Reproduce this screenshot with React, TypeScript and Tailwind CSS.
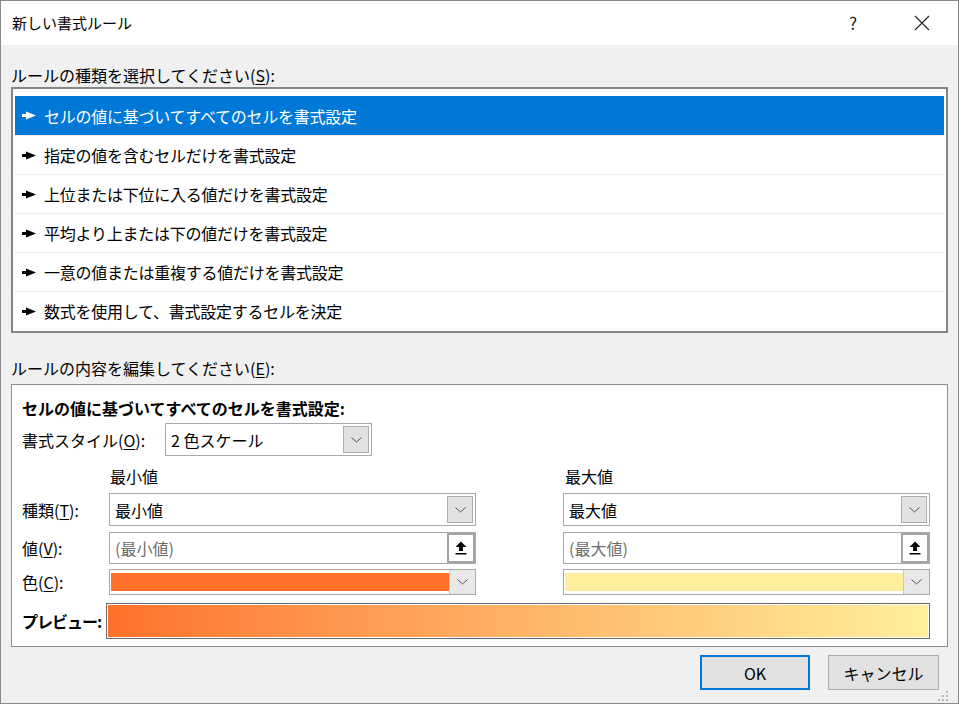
import React from 'react';

const ruleTypes = [
  'セルの値に基づいてすべてのセルを書式設定',
  '指定の値を含むセルだけを書式設定',
  '上位または下位に入る値だけを書式設定',
  '平均より上または下の値だけを書式設定',
  '一意の値または重複する値だけを書式設定',
  '数式を使用して、書式設定するセルを決定',
];

const Pointer: React.FC<{ light?: boolean }> = ({ light }) => (
  <svg width="14" height="9" viewBox="0 0 14 9" className="shrink-0">
    <polygon points="0,3 4,3 4,0.5 14,4.5 4,8.5 4,6 0,6" fill={light ? '#ffffff' : '#000000'} />
  </svg>
);

const Chevron = () => (
  <svg width="11" height="6" viewBox="0 0 11 6">
    <polyline points="0.5,0.5 5.5,5 10.5,0.5" fill="none" stroke="#505050" strokeWidth="1" />
  </svg>
);

const DropButton = () => (
  <div className="m-[2px] flex w-[26px] shrink-0 items-center justify-center self-stretch border border-[#acacac] bg-[#e1e1e1]">
    <Chevron />
  </div>
);

const Key: React.FC<{ text: string; k: string }> = ({ text, k }) => (
  <span className="whitespace-nowrap">
    {text}(<span className="underline underline-offset-2">{k}</span>):
  </span>
);

const Select: React.FC<{ value: string; className?: string }> = ({ value, className = '' }) => (
  <div className={`flex h-[33px] items-stretch border border-[#a9a9a9] bg-white ${className}`}>
    <div className="flex flex-1 items-center pl-[5px]">{value}</div>
    <DropButton />
  </div>
);

const RefInput: React.FC<{ placeholder: string }> = ({ placeholder }) => (
  <div className="flex h-[32px] items-stretch border border-[#a9a9a9] bg-white">
    <div className="flex flex-1 items-center pl-[5px] text-[#6d6d6d]">{placeholder}</div>
    <div className="flex w-[28px] shrink-0 items-center justify-center border-2 border-[#a3a3a3] bg-white">
      <svg width="12" height="14" viewBox="0 0 12 14">
        <polygon points="6,0.5 11.5,6 8,6 8,10 4,10 4,6 0.5,6" fill="#000" />
        <rect x="0.5" y="12" width="11" height="1.5" fill="#000" />
      </svg>
    </div>
  </div>
);

const ColorPick: React.FC<{ color: string }> = ({ color }) => (
  <div className="flex h-[26px] items-stretch border border-[#a9a9a9] bg-white">
    <div className="flex flex-1 py-[3px] pl-[1px]">
      <div className="flex-1" style={{ background: color }} />
    </div>
    <div className="flex w-[26px] shrink-0 items-center justify-center border-l border-[#c8c8c8] bg-[#e8e8e8]">
      <Chevron />
    </div>
  </div>
);

// label column + min column + max column
const Row: React.FC<{ label?: React.ReactNode; min: React.ReactNode; max: React.ReactNode; className?: string }> = ({
  label,
  min,
  max,
  className = '',
}) => (
  <div className={`flex items-center ${className}`}>
    <div className="w-[87px] shrink-0">{label}</div>
    <div className="w-[367px] shrink-0">{min}</div>
    <div className="ml-[87px] w-[367px] shrink-0">{max}</div>
  </div>
);

export default function App() {
  return (
    <div className="flex h-[704px] w-[959px] flex-col border border-[#8a8a8a] bg-[#f0f0f0] text-[16px] leading-[20px] text-black font-['Noto_Sans_CJK_JP',sans-serif]">
      {/* title bar */}
      <div className="flex h-[44px] shrink-0 items-center bg-white pl-[11px]">
        <span className="text-[15px]">新しい書式ルール</span>
        <div className="ml-auto flex items-center">
          <div className="flex w-[46px] justify-center text-[17px] text-[#222]">?</div>
          <div className="ml-[23px] mr-[13px] flex w-[46px] justify-center">
            <svg width="16" height="16" viewBox="0 0 16 16">
              <path d="M1 1 L15 15 M15 1 L1 15" stroke="#222" strokeWidth="1.1" />
            </svg>
          </div>
        </div>
      </div>

      <div className="flex flex-1 flex-col px-[10px]">
        <div className="pt-[20px]">
          <Key text="ルールの種類を選択してください" k="S" />
        </div>

        {/* rule type list */}
        <div className="mt-[2px] border-2 border-[#858585] bg-white px-[2px] pt-[7px] pb-[1px]">
          {ruleTypes.map((t, i) => (
            <div
              key={t}
              className={`flex h-[39px] items-center gap-[8px] pl-[7px] ${
                i === 0 ? 'bg-[#0078d7] text-white' : 'border-t border-[#ececec]'
              }`}
            >
              <Pointer light={i === 0} />
              <span className="tracking-[-0.25px]">{t}</span>
            </div>
          ))}
        </div>

        <div className="mt-[25px]">
          <Key text="ルールの内容を編集してください" k="E" />
        </div>

        {/* rule description panel */}
        <div className="mt-[6px] border border-[#8c8c8c] bg-white pt-[13px] pr-[17px] pb-[7px] pl-[10px]">
          <div className="font-bold">セルの値に基づいてすべてのセルを書式設定:</div>

          <div className="mt-[5px] flex items-center">
            <div className="w-[143px]">
              <Key text="書式スタイル" k="O" />
            </div>
            <Select value="2 色スケール" className="w-[207px]" />
          </div>

          <Row className="mt-[10px]" min={<div className="pl-[1px]">最小値</div>} max={<div className="pl-[2px]">最大値</div>} />
          <Row className="mt-[7px]" label={<Key text="種類" k="T" />} min={<Select value="最小値" />} max={<Select value="最大値" />} />
          <Row
            className="mt-[6px]"
            label={<Key text="値" k="V" />}
            min={<RefInput placeholder="(最小値)" />}
            max={<RefInput placeholder="(最大値)" />}
          />
          <Row
            className="mt-[5px]"
            label={<Key text="色" k="C" />}
            min={<ColorPick color="#ff7128" />}
            max={<ColorPick color="#ffef9c" />}
          />

          <div className="mt-[8px] flex items-center">
            <div className="w-[84px] shrink-0 whitespace-nowrap font-bold tracking-[-1px]">プレビュー:</div>
            <div className="h-[36px] flex-1 border border-[#6a6a6a] p-[1px]">
              <div className="h-full w-full bg-gradient-to-r from-[#ff7128] to-[#ffef9c]" />
            </div>
          </div>
        </div>

        {/* dialog buttons */}
        <div className="mt-[8px] flex justify-end gap-[18px] pr-[9px]">
          <button className="flex h-[35px] w-[110px] items-center justify-center border-2 border-[#0078d7] bg-[#e1e1e1]">
            OK
          </button>
          <button className="flex h-[35px] w-[111px] items-center justify-center border border-[#adadad] bg-[#e1e1e1]">
            キャンセル
          </button>
        </div>

        <div className="mt-auto flex justify-end pb-[2px]">
          <svg width="10" height="10" viewBox="0 0 10 10">
            {[
              [8, 0],
              [8, 4],
              [4, 4],
              [8, 8],
              [4, 8],
              [0, 8],
            ].map(([x, y]) => (
              <rect key={`${x}-${y}`} x={x} y={y} width="2" height="2" fill="#b8b8b8" />
            ))}
          </svg>
        </div>
      </div>
    </div>
  );
}
